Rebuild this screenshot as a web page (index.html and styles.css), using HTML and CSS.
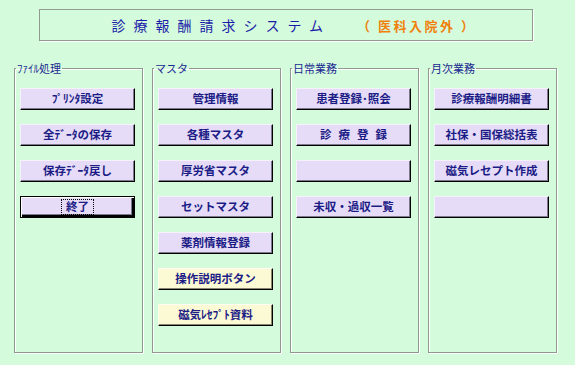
FILE: index.html
```html
<!DOCTYPE html>
<html lang="ja">
<head>
<meta charset="utf-8">
<title>診療報酬請求システム</title>
<link rel="stylesheet" href="styles.css">
</head>
<body>
<div class="page">
  <div class="title">
    <span class="title-main">診療報酬請求システム</span>
    <span class="title-sub">（ 医科入院外 ）</span>
  </div>
  <div class="groups">
    <fieldset class="group">
      <legend>ﾌｧｲﾙ処理</legend>
      <button class="btn">ﾌﾟﾘﾝﾀ設定</button>
      <button class="btn">全ﾃﾞｰﾀの保存</button>
      <button class="btn">保存ﾃﾞｰﾀ戻し</button>
      <button class="btn btn-default"><span class="focus">終了</span></button>
    </fieldset>
    <fieldset class="group">
      <legend>マスタ</legend>
      <button class="btn">管理情報</button>
      <button class="btn">各種マスタ</button>
      <button class="btn">厚労省マスタ</button>
      <button class="btn">セットマスタ</button>
      <button class="btn">薬剤情報登録</button>
      <button class="btn btn-yellow">操作説明ボタン</button>
      <button class="btn btn-yellow">磁気ﾚｾﾌﾟﾄ資料</button>
    </fieldset>
    <fieldset class="group">
      <legend>日常業務</legend>
      <button class="btn">患者登録･照会</button>
      <button class="btn btn-spaced">診療登録</button>
      <button class="btn"></button>
      <button class="btn">未収・過収一覧</button>
    </fieldset>
    <fieldset class="group">
      <legend>月次業務</legend>
      <button class="btn">診療報酬明細書</button>
      <button class="btn">社保・国保総括表</button>
      <button class="btn">磁気レセプト作成</button>
      <button class="btn"></button>
    </fieldset>
  </div>
</div>
</body>
</html>
```
FILE: styles.css
```css
html, body {
  margin: 0;
  padding: 0;
  background: #d4fcdc;
}
body {
  font-family: "Noto Sans CJK JP", "Noto Sans", sans-serif;
  width: 575px;
  height: 365px;
  overflow: hidden;
}
.page {
  padding-top: 9px;
}
.title {
  box-sizing: border-box;
  margin-left: 39px;
  width: 494px;
  height: 32px;
  border: 1px solid #909a90;
  box-shadow: 1px 1px 0 #ffffff;
  display: flex;
  align-items: center;
  justify-content: center;
  padding-left: 16px;
}
.title-main {
  font-size: 14px;
  letter-spacing: 8px;
  color: #1c1ca8;
  line-height: 1;
}
.title-sub {
  font-size: 13px;
  font-weight: 700;
  letter-spacing: 2.5px;
  color: #f0800c;
  line-height: 1;
  margin-left: 26px;
}
.groups {
  display: grid;
  grid-template-columns: 129px 129px 129px 129px;
  column-gap: 9px;
  margin-top: 21px;
  padding-left: 14px;
}
.group {
  box-sizing: border-box;
  height: 291px;
  margin: 0;
  padding: 13px 0 0 1px;
  border: 1px solid #8e9a8e;
  box-shadow: 1px 1px 0 #ffffff, inset 1px 1px 0 #ffffff;
  display: flex;
  flex-direction: column;
  align-items: flex-start;
  gap: 14px;
}
.group legend {
  font-size: 11px;
  line-height: 13px;
  color: #1a2a90;
  padding: 0 1px;
  margin-left: 0;
}
.btn {
  box-sizing: border-box;
  margin: 0 0 0 4px;
  width: 115px;
  height: 22px;
  padding: 0;
  background: #e6dcf8;
  border: 1px solid;
  border-color: #f6f2fc #000000 #000000 #f6f2fc;
  box-shadow: inset -1px -1px 0 #7c7890;
  font-family: "Noto Sans CJK JP", "Noto Sans", sans-serif;
  font-size: 11.5px;
  font-weight: 700;
  color: #1c1c86;
  line-height: 1;
  display: flex;
  align-items: center;
  justify-content: center;
}
.btn-yellow {
  background: #fcfad4;
  border-color: #fffef0 #000000 #000000 #fffef0;
  box-shadow: inset -1px -1px 0 #88866c;
}
.btn-spaced {
  letter-spacing: 7px;
  padding-left: 7px;
}
.btn-default {
  border: 1px solid #000000;
  box-shadow: inset 1px 1px 0 #ffffff, inset -2px -2px 0 #000000, inset -3px -3px 0 #7c7890;
}
.focus {
  border: 1px dotted #000000;
  padding: 1px 4px;
}
```
